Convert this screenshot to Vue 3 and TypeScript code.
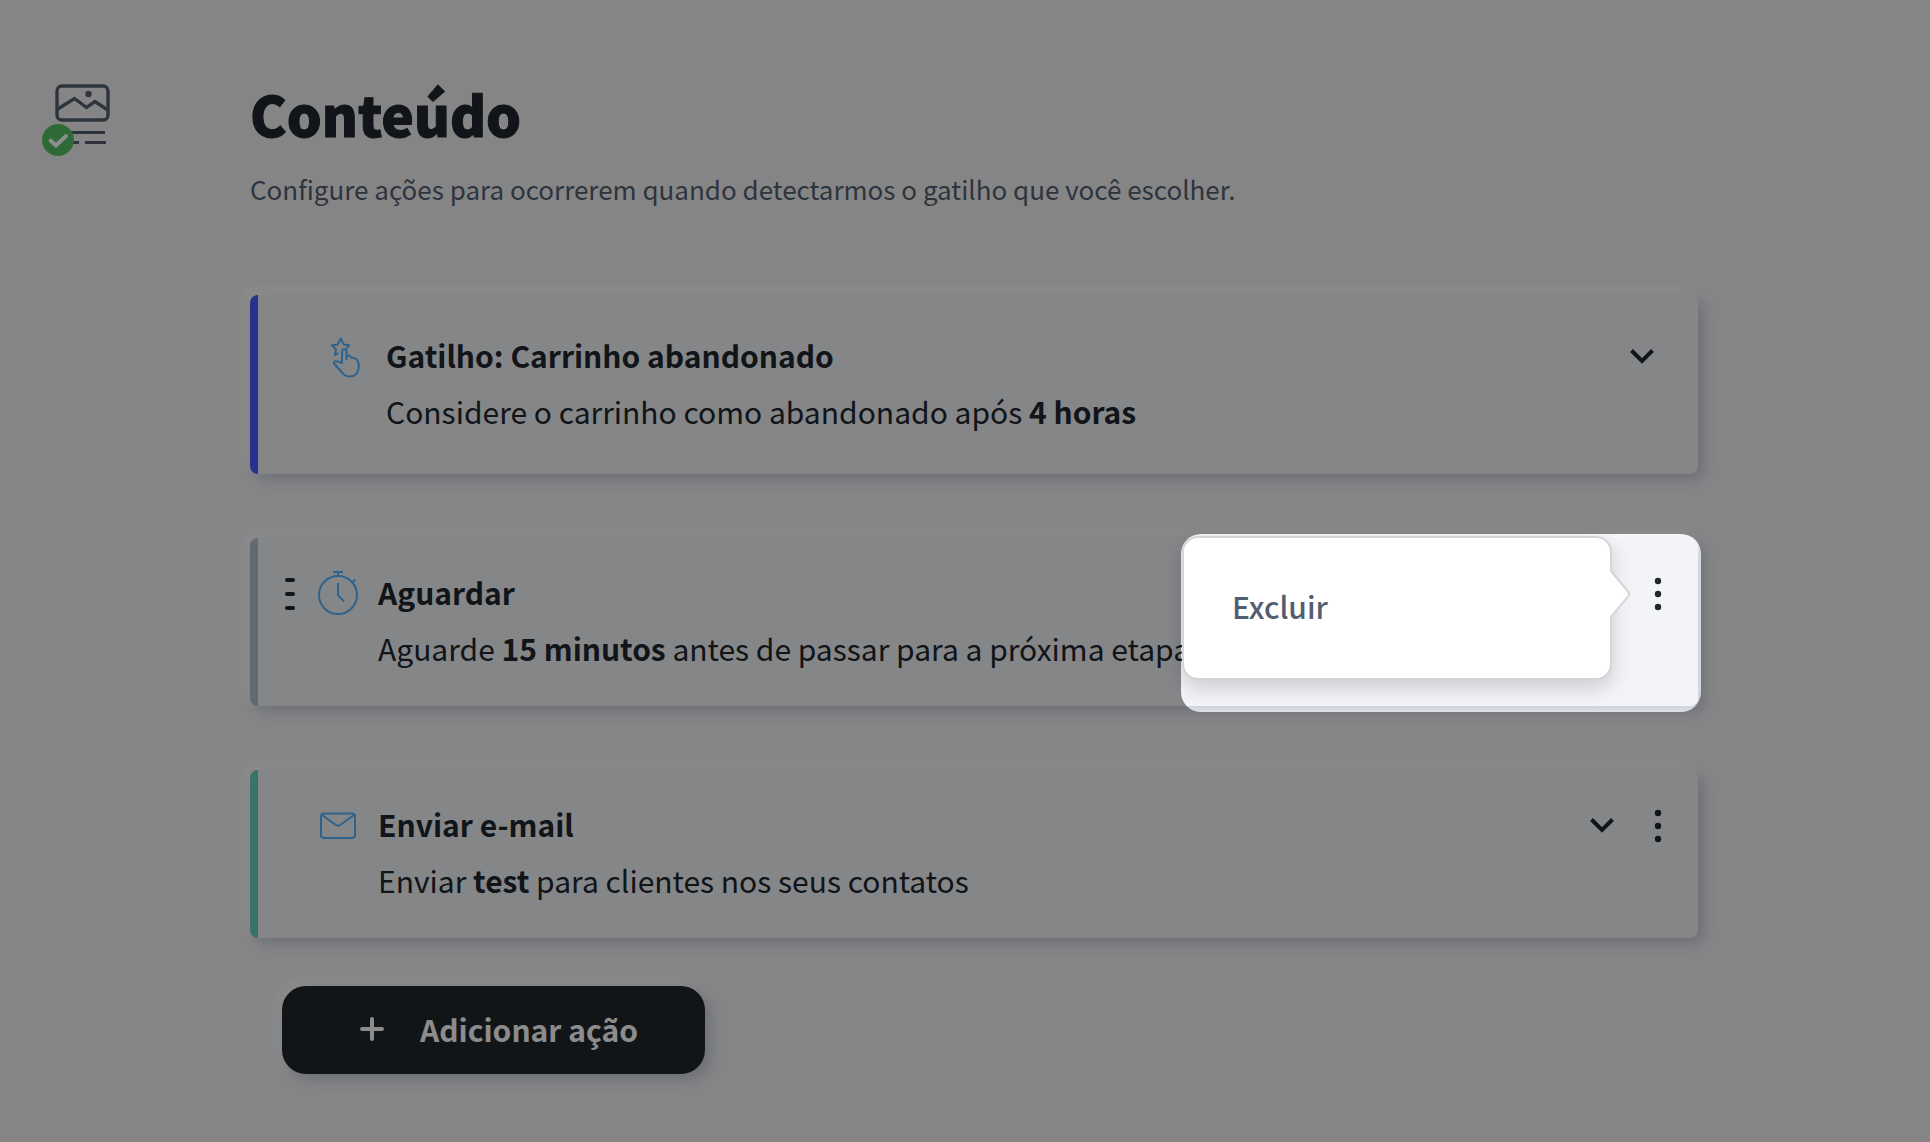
<script setup lang="ts">
import { ref } from 'vue'

type ActionKind = 'trigger' | 'wait' | 'email'

interface ActionCard {
  kind: ActionKind
  title: string
  before: string
  strong: string
  after: string
  draggable: boolean
  expandable: boolean
  hasMenu: boolean
}

const cards: ActionCard[] = [
  {
    kind: 'trigger',
    title: 'Gatilho: Carrinho abandonado',
    before: 'Considere o carrinho como abandonado após ',
    strong: '4 horas',
    after: '',
    draggable: false,
    expandable: true,
    hasMenu: false,
  },
  {
    kind: 'wait',
    title: 'Aguardar',
    before: 'Aguarde ',
    strong: '15 minutos',
    after: ' antes de passar para a próxima etapa',
    draggable: true,
    expandable: false,
    hasMenu: true,
  },
  {
    kind: 'email',
    title: 'Enviar e-mail',
    before: 'Enviar ',
    strong: 'test',
    after: ' para clientes nos seus contatos',
    draggable: false,
    expandable: true,
    hasMenu: true,
  },
]

const openMenu = ref<ActionKind | null>('wait')

function toggleMenu(kind: ActionKind) {
  openMenu.value = openMenu.value === kind ? null : kind
}
</script>

<template>
  <div class="page">
    <aside class="step">
      <svg class="step-icon" width="72" height="76" viewBox="0 0 72 76" fill="none" aria-hidden="true">
        <rect x="15" y="3" width="51" height="34" rx="5" stroke="#55606f" stroke-width="3.400" />
        <path d="M15 26.500L32.500 15.500L44.500 24.500L53 18.500L65 26.500" stroke="#55606f" stroke-width="3.400" />
        <circle cx="46.500" cy="11" r="3.200" fill="#55606f" />
        <path d="M28 49.500H63M28 59.500H37M43 59.500H64" stroke="#55606f" stroke-width="3" />
        <circle cx="16" cy="57" r="16" fill="#54c264" />
        <path d="M8.500 57.500L14 62.500L24 53" stroke="#fff" stroke-width="4" stroke-linecap="round" stroke-linejoin="round" />
      </svg>
    </aside>

    <main class="content">
      <h1>Conteúdo</h1>
      <p class="subtitle">Configure ações para ocorrerem quando detectarmos o gatilho que você escolher.</p>

      <section class="cards">
        <article
          v-for="card in cards"
          :key="card.kind"
          class="card"
          :class="[`card-${card.kind}`, { 'is-open': openMenu === card.kind }]"
        >
          <div class="handle-slot">
            <button v-if="card.draggable" class="icon-button" type="button" aria-label="Mover">
              <svg width="16" height="36" viewBox="0 0 16 36" aria-hidden="true">
                <path d="M5 4H11M5 18H11M5 32H11" stroke="#20272e" stroke-width="4" stroke-linecap="round" />
              </svg>
            </button>
          </div>

          <div class="kind-slot">
            <svg v-if="card.kind === 'trigger'" class="kind-icon" width="40" height="48" viewBox="0 0 40 48" aria-hidden="true">
              <path d="M12.200 21.200L8.700 23L10 17.500L6 13.300L11.800 12.400L14.700 6.500L17.600 12.400L23.400 13.300L20.200 16.600" />
              <path d="M16 31V19.500Q16 17.300 18.200 17.300Q20.500 17.300 20.500 19.500V27.500V23.800Q24 22.500 25 25.500Q30 25.500 32 29.500Q33.500 32.500 32.500 37Q31 44.500 24 44.500Q19 44.500 16.500 41L8 31.500Q7.500 29.500 10 29.300Q12.500 29.200 16 31Z" />
            </svg>
            <svg v-else-if="card.kind === 'wait'" class="kind-icon" width="40" height="48" viewBox="0 0 40 48" aria-hidden="true">
              <circle cx="20" cy="26" r="19" />
              <path d="M15 3H25M20 3V7M34.500 13L37.500 10.500M20 14V26L26 32.500" />
            </svg>
            <svg v-else class="kind-icon" width="40" height="48" viewBox="0 0 40 48" aria-hidden="true">
              <rect x="3" y="12.500" width="34" height="24.500" rx="3" />
              <path d="M4 14L17.500 23.800Q20 25.600 22.500 23.800L36 14" />
            </svg>
          </div>

          <div class="card-text">
            <h2>{{ card.title }}</h2>
            <p>{{ card.before }}<strong>{{ card.strong }}</strong>{{ card.after }}</p>
          </div>

          <div class="card-actions">
            <button v-if="card.expandable" class="icon-button" type="button" aria-label="Expandir">
              <svg width="24" height="16" viewBox="0 0 24 16" fill="none" aria-hidden="true">
                <path d="M1.500 1.500L12 12L22.500 1.500" stroke="#20272e" stroke-width="4" />
              </svg>
            </button>
            <button
              v-if="card.hasMenu"
              class="icon-button"
              type="button"
              aria-label="Mais opções"
              :aria-expanded="openMenu === card.kind"
              @click="toggleMenu(card.kind)"
            >
              <svg width="16" height="36" viewBox="0 0 16 36" fill="#20272e" aria-hidden="true">
                <circle cx="8" cy="5" r="3.200" />
                <circle cx="8" cy="18" r="3.200" />
                <circle cx="8" cy="31" r="3.200" />
              </svg>
            </button>
          </div>

          <template v-if="openMenu === card.kind">
            <div class="popover">
              <button class="popover-item" type="button">Excluir</button>
              <svg class="popover-arrow" width="22" height="46" viewBox="0 0 22 46" aria-hidden="true">
                <path d="M0 0H2V1L18 20.500Q20 23 18 25.500L2 45V46H0Z" fill="#fff" />
                <path d="M1 0L18 20.500Q20 23 18 25.500L1 46" fill="none" stroke="#d4d5d8" stroke-width="2" />
              </svg>
            </div>
            <div class="spotlight"></div>
          </template>
        </article>
      </section>

      <button class="add-button" type="button">
        <svg width="24" height="24" viewBox="0 0 24 24" aria-hidden="true">
          <path d="M12 2V22M2 12H22" stroke="#fff" stroke-width="4" stroke-linecap="round" />
        </svg>
        <span>Adicionar ação</span>
      </button>
    </main>
  </div>
</template>

<style>
body {
  margin: 0;
  background: #f2f3f5;
}
</style>

<style scoped>
.page {
  display: flex;
  min-height: 100vh;
  box-sizing: border-box;
  overflow: hidden;
  padding: 73px 232px 64px 42px;
  color: #20272e;
  font-family: 'Noto Sans CJK SC', 'Noto Sans', sans-serif;
  font-size: 30px;
  line-height: 56px;
}

.step {
  flex: 0 0 208px;
  padding-top: 10px;
}

.step-icon {
  display: block;
}

.content {
  flex: 1;
  min-width: 0;
}

h1,
h2,
p {
  margin: 0;
}

h1 {
  font-size: 55px;
  font-weight: 900;
  line-height: 80px;
  -webkit-text-stroke: 1px currentColor;
}

.subtitle {
  margin-top: 16px;
  color: #55606f;
  font-size: 26px;
  line-height: 40px;
}

.cards {
  display: flex;
  flex-direction: column;
  gap: 64px;
  margin-top: 86px;
}

.card {
  position: relative;
  display: flex;
  padding: 26px 32px 30px 24px;
  border-left: 8px solid;
  border-radius: 8px;
  background: #f3f4f7;
  box-shadow:
    6px 6px 14px #c8ccd8,
    -6px -6px 14px #fff;
}

.card.is-open {
  z-index: 1;
}

.card-trigger {
  padding: 32px 44px 35px 32px;
  border-left-color: #4b5aff;
}

.card-wait {
  border-left-color: #b5c0cf;
}

.card-email {
  border-left-color: #66d4c0;
}

.handle-slot,
.kind-slot,
.card-actions {
  display: flex;
  align-items: center;
  height: 60px;
}

.kind-slot {
  height: 58px;
}

.handle-slot {
  flex: 0 0 36px;
}

.kind-slot {
  flex: 0 0 60px;
}

.kind-icon {
  fill: none;
  stroke: #52b4ff;
  stroke-width: 2;
  stroke-linejoin: round;
}

.card-text {
  flex: 1;
  min-width: 0;
}

h2 {
  font-size: 30px;
  font-weight: 700;
}

strong {
  font-weight: 700;
}

.card-actions {
  gap: 36px;
}

.icon-button {
  display: flex;
  padding: 0;
  border: 0;
  background: none;
  cursor: pointer;
}

.popover {
  position: absolute;
  top: -2px;
  right: 86px;
  width: 430px;
  box-sizing: border-box;
  padding: 40px 48px 44px;
  border: 2px solid #d4d5d8;
  border-radius: 16px;
  background: #fff;
  box-shadow: 0 8px 20px rgba(0, 0, 0, 0.16);
}

.popover-item {
  display: block;
  width: 100%;
  padding: 0;
  border: 0;
  background: none;
  color: #535d70;
  font: inherit;
  font-weight: 500;
  text-align: left;
  cursor: pointer;
}

.popover-arrow {
  position: absolute;
  top: 33px;
  left: 100%;
}

.spotlight {
  position: absolute;
  top: -4px;
  right: -3px;
  bottom: -6px;
  width: 520px;
  border-radius: 20px;
  box-shadow: 0 0 0 9999px rgba(0, 0, 0, 0.45);
  pointer-events: none;
}

.add-button {
  display: flex;
  align-items: center;
  gap: 36px;
  margin: 48px 0 0 32px;
  padding: 15px 67px 17px 78px;
  border: 0;
  border-radius: 24px;
  background: #1f272d;
  color: #fff;
  font: inherit;
  font-weight: 700;
  box-shadow:
    6px 6px 14px #c8ccd8,
    -6px -6px 14px #fff;
  cursor: pointer;
}
</style>
